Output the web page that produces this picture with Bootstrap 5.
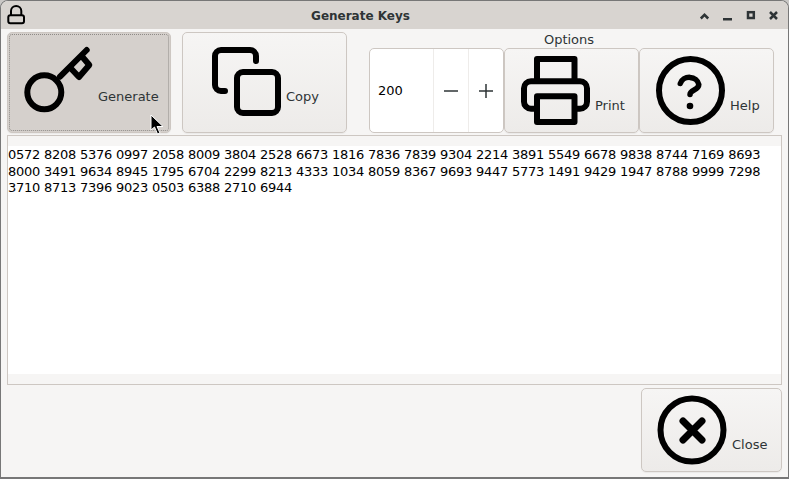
<!DOCTYPE html>
<html lang="en">
<head>
<meta charset="utf-8">
<title>Generate Keys</title>
<link href="https://cdn.jsdelivr.net/npm/bootstrap@5.3.0/dist/css/bootstrap.min.css" rel="stylesheet">
<style>
html,body{height:479px;overflow:hidden;background:#c9c7c5}
body{font-family:"DejaVu Sans",sans-serif;font-size:13px;color:#2e3436}
.win{width:789px;height:479px;background:#f6f5f4;border:1px solid #777;border-radius:8px 8px 0 0;border-bottom-width:2px;overflow:hidden}
.tbar{height:28px;background:#d8d4d0;padding:0 6px}
.tbar-title{font-weight:700;font-size:12px;color:#2e3436;left:0;right:0;text-align:center;padding-top:1px;padding-right:68px}
.tbar-ctl{margin-left:auto}
.tbar-ctl svg{display:block}
.tools{height:106px;padding:3px 7px 0 6px}
.kbtn{background:linear-gradient(#f6f5f4,#edebe9);border:1px solid #cdc7c2;border-radius:5px;padding:0;color:#2e3436;font-size:13px;display:flex;align-items:flex-end;box-shadow:0 1px 1px rgba(0,0,0,.05)}
.kbtn:hover,.kbtn:focus{background:linear-gradient(#f6f5f4,#edebe9);border-color:#cdc7c2;color:#2e3436}
.kbtn svg{display:block;flex:none;align-self:flex-start}
.b-gen{width:164px;height:101px;background:#d5d0cc;position:relative;outline:1px dotted #8f8b87;outline-offset:-3px}
.b-gen:hover{background:#d5d0cc}
.b-copy{width:165px;height:101px;margin-left:11px}
.opts{margin-left:22px;width:405px}
.opts-label{height:16px;line-height:16px;text-align:center;padding-right:5px;white-space:nowrap}
.spin{width:135px;height:85px;background:#fff;border:1px solid #cdc7c2;border-radius:5px}
.spin-val{width:63px;padding-left:8px;color:#000}
.spin-b{width:35px;border-left:1px solid #eeecea;color:#2e3436}
.b-print,.b-help{width:135px;height:85px}
.keys{margin:0 6px;height:250px;border:1px solid #cdc7c2;background:#f6f5f4;padding:10px 0}
.keys-in{background:#fff;height:100%;color:#000;line-height:16.5px;padding-top:1px;font-size:13px;white-space:pre;letter-spacing:-.27px;word-spacing:.14px}
.foot{padding:3px 6px 0 0}
.b-close{width:141px;height:84px}
.lab-top{padding-bottom:26px}
.lab-mid{padding-bottom:17px}
.lab-end{padding-bottom:17px}
.kbtn svg.cursor{position:absolute;left:142px;top:81px}
</style>
</head>
<body>
<div class="win d-flex flex-column">
  <div class="tbar d-flex align-items-center position-relative flex-none">
    <svg width="20" height="22" viewBox="0 0 20 22"><rect x="1.3" y="11.300" width="15.700" height="8" rx="2" fill="none" stroke="#000" stroke-width="2"/><path d="M4 11V7a5.150 5 0 0 1 10.300 0v4" fill="none" stroke="#000" stroke-width="2"/></svg>
    <div class="tbar-title position-absolute">Generate Keys</div>
    <div class="tbar-ctl d-flex align-items-center">
      <svg width="84" height="16" viewBox="0 0 84 16"><g fill="none" stroke="#2e3436" stroke-width="2.500"><path d="M2.800 11.500L6.500 7.800 10.200 11.500"/><path d="M25 12.200h9"/><rect x="50" y="5.200" width="5.800" height="5.800"/><path d="M72 5l7 7M79 5l-7 7"/></g></svg>
    </div>
  </div>
  <div class="tools d-flex align-items-start">
    <button type="button" class="btn kbtn b-gen">
      <svg width="90" height="99" viewBox="0 0 90 99"><g fill="none" stroke="#000" stroke-width="6" stroke-linecap="round" stroke-linejoin="round"><circle cx="36.300" cy="59.300" r="17"/><path d="M52 43.700L78.700 17"/><path d="M63.700 36.300L71 44 81.300 32 74.700 24.300"/></g></svg>
      <span class="lab-top">Generate</span>
      <svg class="cursor" width="15" height="21" viewBox="0 0 15 21"><path d="M1 1v15l3.500-3 3 7 2.500-1-3-6.500H13z" fill="#000" stroke="#fff" stroke-width="1"/></svg>
    </button>
    <button type="button" class="btn kbtn b-copy">
      <svg width="103" height="99" viewBox="0 0 103 99"><g fill="none" stroke="#000" stroke-width="6" stroke-linecap="round" stroke-linejoin="round"><path d="M73 28v-5a6 6 0 0 0-6-6H38a6 6 0 0 0-6 6v29a6 6 0 0 0 6 6h4"/><rect x="54" y="39" width="41" height="41" rx="6"/></g></svg>
      <span class="lab-top">Copy</span>
    </button>
    <div class="opts">
      <div class="opts-label">Options</div>
      <div class="d-flex">
        <div class="spin d-flex align-items-stretch">
          <div class="spin-val d-flex align-items-center">200</div>
          <div class="spin-b d-flex align-items-center justify-content-center"><svg width="16" height="16" viewBox="0 0 16 16"><path d="M1 8h14" stroke="#2e3436" stroke-width="1.500"/></svg></div>
          <div class="spin-b d-flex align-items-center justify-content-center"><svg width="16" height="16" viewBox="0 0 16 16"><path d="M1 8h14M8 1v14" stroke="#2e3436" stroke-width="1.500"/></svg></div>
        </div>
        <button type="button" class="btn kbtn b-print">
          <svg width="90" height="83" viewBox="0 0 90 83"><g fill="none" stroke="#000" stroke-width="6" stroke-linejoin="round"><path d="M32 32V10h37.500v22"/><path d="M32 59.700H26a7 7 0 0 1-7-7V39.300a7 7 0 0 1 7-7h49a7 7 0 0 1 7 7v13.400a7 7 0 0 1-7 7H69.500"/><rect x="32" y="47.300" width="37.500" height="25.700"/></g></svg>
          <span class="lab-mid">Print</span>
        </button>
        <button type="button" class="btn kbtn b-help">
          <svg width="90" height="83" viewBox="0 0 90 83"><circle cx="50.500" cy="41.500" r="31.500" fill="none" stroke="#000" stroke-width="6"/><path d="M40.300 34.500a9.500 8.500 0 0 1 18.500 1c0 6-8.800 5-8.800 10" fill="none" stroke="#000" stroke-width="5.500" stroke-linecap="round"/><circle cx="50" cy="57" r="3.300" fill="#000"/></svg>
          <span class="lab-mid">Help</span>
        </button>
      </div>
    </div>
  </div>
  <div class="keys">
    <div class="keys-in">0572 8208 5376 0997 2058 8009 3804 2528 6673 1816 7836 7839 9304 2214 3891 5549 6678 9838 8744 7169 8693
8000 3491 9634 8945 1795 6704 2299 8213 4333 1034 8059 8367 9693 9447 5773 1491 9429 1947 8788 9999 7298
3710 8713 7396 9023 0503 6388 2710 6944</div>
  </div>
  <div class="foot d-flex justify-content-end">
    <button type="button" class="btn kbtn b-close">
      <svg width="90" height="82" viewBox="0 0 90 82"><g fill="none" stroke="#000" stroke-width="6" stroke-linecap="round"><circle cx="50" cy="41" r="31.500"/><path d="M41 32l19 19M60 32L41 51" stroke-width="7"/></g></svg>
      <span class="lab-end">Close</span>
    </button>
  </div>
</div>
</body>
</html>
